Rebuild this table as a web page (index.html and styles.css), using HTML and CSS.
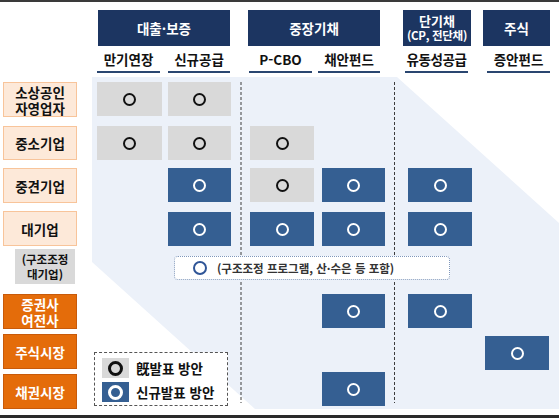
FILE: index.html
```html
<!DOCTYPE html>
<html lang="ko">
<head>
<meta charset="utf-8">
<link rel="stylesheet" href="styles.css">
</head>
<body>
<div class="board">
  <svg class="backdrop" width="559" height="418" viewBox="0 0 559 418">
    <polygon points="92,77 397,77 559,223 559,409 255,409 92,262" fill="#ecf1f9"/>
    <line x1="241" y1="82" x2="241" y2="403" stroke="#3c3c3c" stroke-width="1" stroke-dasharray="3 2"/>
    <line x1="394.5" y1="82" x2="394.5" y2="403" stroke="#3c3c3c" stroke-width="1" stroke-dasharray="3 2"/>
  </svg>

  <div class="heads">
    <div class="grp g1">대출·보증</div>
    <div class="grp g2">중장기채</div>
    <div class="grp g3"><span class="line">단기채</span><span class="line grp-small">(CP, 전단채)</span></div>
    <div class="grp g4">주식</div>
    <div class="sub s1">만기연장</div>
    <div class="sub s2">신규공급</div>
    <div class="sub s3">P-CBO</div>
    <div class="sub s4">채안펀드</div>
    <div class="sub s5">유동성공급</div>
    <div class="sub s6">증안펀드</div>
  </div>

  <div class="matrix">
    <div class="lbl peach r1"><span class="line">소상공인</span><span class="line">자영업자</span></div>
    <div class="lbl peach r2">중소기업</div>
    <div class="lbl peach r3">중견기업</div>
    <div class="lbl peach r4">대기업</div>
    <div class="lbl gray-lbl r5"><span class="line">(구조조정</span><span class="line">대기업)</span></div>
    <div class="lbl orange r6"><span class="line">증권사</span><span class="line">여전사</span></div>
    <div class="lbl orange r7">주식시장</div>
    <div class="lbl orange r8">채권시장</div>

    <div class="cell old r1 c1"><span class="o"></span></div>
    <div class="cell old r1 c2"><span class="o"></span></div>

    <div class="cell old r2 c1"><span class="o"></span></div>
    <div class="cell old r2 c2"><span class="o"></span></div>
    <div class="cell old r2 c3"><span class="o"></span></div>

    <div class="cell new r3 c2"><span class="o"></span></div>
    <div class="cell old r3 c3"><span class="o"></span></div>
    <div class="cell new r3 c4"><span class="o"></span></div>
    <div class="cell new r3 c5"><span class="o"></span></div>

    <div class="cell new r4 c2 down1"><span class="o"></span></div>
    <div class="cell new r4 c3 down1"><span class="o"></span></div>
    <div class="cell new r4 c4 down1"><span class="o"></span></div>
    <div class="cell new r4 c5 down1"><span class="o"></span></div>

    <div class="banner"><span class="o"></span><span class="banner-text">(구조조정 프로그램, 산·수은 등 포함)</span></div>

    <div class="cell new r6 c4"><span class="o"></span></div>
    <div class="cell new r6 c5"><span class="o"></span></div>

    <div class="cell new r7 c6 down2"><span class="o"></span></div>

    <div class="cell new r8 c4 up1"><span class="o"></span></div>

    <div class="legend">
      <div class="legend-row"><span class="swatch old"><span class="o"></span></span><span>旣발표 방안</span></div>
      <div class="legend-row"><span class="swatch new"><span class="o"></span></span><span>신규발표 방안</span></div>
    </div>
  </div>
</div>
</body>
</html>
```

FILE: styles.css
```css
* { box-sizing: border-box; }
html, body { margin: 0; padding: 0; background: #fff; }
body {
  font-family: "Noto Sans CJK KR", "Noto Sans", sans-serif;
  font-weight: 700;
  color: #111;
}
.board {
  position: relative;
  width: 559px;
  height: 418px;
  border-top: 2px solid #3a3a3a;
  border-bottom: 3px solid #2a2a2a;
  overflow: hidden;
  background: #fff;
}
.backdrop {
  position: absolute;
  left: 0;
  top: -2px;
  z-index: 0;
}
.line {
  display: block;
  height: 16px;
  line-height: 16px;
}

/* ---------- headers ---------- */
.heads {
  position: relative;
  z-index: 1;
  display: grid;
  padding: 8px 0 0 97px;
  grid-template-columns: 63px 8px 62px 19px 63px 6px 62px 25px 63px 19px 63px;
  grid-template-rows: 36px 27px;
}
.grp {
  grid-row: 1;
  background: #1c3561;
  color: #fff;
  font-size: 13.5px;
  display: flex;
  flex-direction: column;
  align-items: center;
  justify-content: center;
  white-space: nowrap;
}
.g1 { grid-column: 1 / 4; margin-left: 1px; }
.g2 { grid-column: 5 / 8; margin-left: -1px; }
.g3 { grid-column: 9 / 10; margin: 0 -3px 0 -2px; font-size: 13px; }
.g3 .line { height: 15px; line-height: 15px; }
.g4 { grid-column: 11 / 12; margin-left: -4px; }
.grp-small { font-size: 11.5px; letter-spacing: -0.3px; }

.sub {
  grid-row: 2;
  font-size: 13.5px;
  color: #111;
  border-bottom: 2px solid #2a4670;
  display: flex;
  align-items: center;
  justify-content: center;
  padding-top: 1px;
  white-space: nowrap;
}
.s1 { grid-column: 1; }
.s2 { grid-column: 3; }
.s3 { grid-column: 5; }
.s4 { grid-column: 7; }
.s5 { grid-column: 9; letter-spacing: -0.4px; }
.s6 { grid-column: 11; }

/* ---------- matrix ---------- */
.matrix {
  position: relative;
  z-index: 1;
  margin-top: 9px;
  padding-left: 2px;
  display: grid;
  grid-template-columns: 76px 19px 65px 6px 63px 19px 64px 8px 63px 23px 64px 13px 64px;
  grid-template-rows: 44px 42px 43px 38px 45px 40px 39px 36px;
  align-items: start;
}
.r1 { grid-row: 1; }
.r2 { grid-row: 2; }
.r3 { grid-row: 3; }
.r4 { grid-row: 4; }
.r5 { grid-row: 5; }
.r6 { grid-row: 6; }
.r7 { grid-row: 7; }
.r8 { grid-row: 8; }
.c1 { grid-column: 3; }
.c2 { grid-column: 5; }
.c3 { grid-column: 7; }
.c4 { grid-column: 9; }
.c5 { grid-column: 11; }
.c6 { grid-column: 13; }

.lbl {
  grid-column: 1;
  height: 35px;
  margin: 0 1px;
  display: flex;
  flex-direction: column;
  align-items: center;
  justify-content: center;
  text-align: center;
  font-size: 13.5px;
  line-height: 16px;
  white-space: nowrap;
}
.peach {
  background: #fde9d9;
  border: 1px solid #f8c49a;
  color: #111;
}
.orange {
  background: #e46c0a;
  border: 1px solid #c85a0a;
  color: #fff;
}
.r2.lbl { height: 34px; }
.r8.lbl { margin-top: 1px; }
.gray-lbl {
  background: #d9d9d9;
  margin-left: 13px;
  width: 60px;
  height: 35px;
  font-size: 11.5px;
  color: #111;
}
.gray-lbl .line { height: 15px; line-height: 15px; }

.cell {
  height: 34px;
  display: flex;
  align-items: center;
  justify-content: center;
}
.down1 { margin-top: 1px; }
.down2 { margin-top: 2px; }
.up1 { margin-top: -1px; }

.o {
  display: block;
  width: 13px;
  height: 13px;
  border-radius: 50%;
  border: 2.5px solid #111;
}
.old { background: #d9d9d9; }
.old .o { border-color: #111; }
.new { background: #355f92; }
.new .o { border-color: #fff; }

.banner {
  grid-row: 5;
  grid-column: 5 / 12;
  justify-self: start;
  margin: 7px 0 0 6px;
  width: 276px;
  height: 24px;
  background: #fff;
  border: 1px dotted #7f97bb;
  border-radius: 4px;
  display: flex;
  align-items: center;
  padding-left: 18px;
  gap: 10px;
}
.banner .o {
  width: 14px;
  height: 14px;
  border: 2.5px solid #2f5597;
}
.banner-text {
  font-size: 11.5px;
  color: #333;
  white-space: nowrap;
}

.legend {
  grid-row: 7 / 9;
  grid-column: 2 / 8;
  justify-self: start;
  margin: 18px 0 0 16px;
  width: 134px;
  height: 54px;
  background: #fff;
  border: 1px dashed #555;
  padding: 5px 0 0 7px;
  display: flex;
  flex-direction: column;
  gap: 4px;
}
.legend-row {
  display: flex;
  align-items: center;
  gap: 7px;
  font-size: 13.5px;
  color: #111;
  white-space: nowrap;
}
.swatch {
  width: 27px;
  height: 20px;
  display: flex;
  align-items: center;
  justify-content: center;
}
.swatch .o {
  width: 15px;
  height: 15px;
  border-width: 3px;
}
```
